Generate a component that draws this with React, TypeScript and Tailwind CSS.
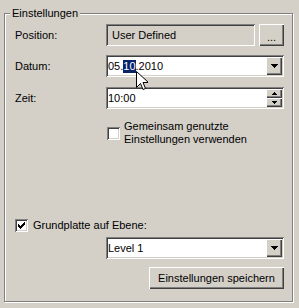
import React from "react";

const raised =
  "shadow-[inset_1px_1px_0_#fff,inset_-1px_-1px_0_#404040,inset_-2px_-2px_0_#808080]";
const sunken =
  "shadow-[inset_1px_1px_0_#808080,inset_-1px_-1px_0_#fff,inset_2px_2px_0_#404040,inset_-2px_-2px_0_#d4d0c8]";

function DownArrow() {
  return (
    <svg width="7" height="4" viewBox="0 0 7 4">
      <path d="M0 0H7L3.5 4Z" fill="#000" shapeRendering="crispEdges" />
    </svg>
  );
}

function SmallArrow({ up }: { up?: boolean }) {
  return (
    <svg width="5" height="3" viewBox="0 0 5 3">
      {up ? (
        <path d="M2 0h1v1h1v1h1v1H0V2h1V1h1z" fill="#000" />
      ) : (
        <path d="M0 0h5v1H4v1H3v1H2V2H1V1H0z" fill="#000" />
      )}
    </svg>
  );
}

function Check({ checked }: { checked?: boolean }) {
  return (
    <div className={`w-[13px] h-[13px] bg-white ${sunken} flex items-center justify-center shrink-0`}>
      {checked && (
        <svg width="7" height="7" viewBox="0 0 7 7">
          <path
            d="M6 0h1v3H6v1H5v1H4v1H3v1H2V6H1V5H0V2h1v1h1v1h1V3h1V2h1V1h1z"
            fill="#000"
          />
        </svg>
      )}
    </div>
  );
}

function Combo({ children }: { children: React.ReactNode }) {
  return (
    <div className={`flex-1 h-[22px] bg-white ${sunken} flex items-center pl-[2px] pr-[2px]`}>
      <div className="flex-1 flex items-center">{children}</div>
      <div className={`w-[16px] h-[18px] bg-[#d4d0c8] ${raised} flex items-center justify-center`}>
        <DownArrow />
      </div>
    </div>
  );
}

export default function App() {
  return (
    <div className="relative w-[299px] h-[308px] bg-[#d4d0c8] pt-[13px] pl-[4px] font-['Liberation_Sans',Arial,sans-serif] text-[11px] leading-[13px] text-black">
      <div className="relative w-[289px] h-[289px] border border-[#808080] shadow-[inset_1px_1px_0_#fff,1px_1px_0_#fff] pl-[10px] pr-[8px] pt-[10px] flex flex-col">
        <span className="absolute left-[5px] top-[-8px] bg-[#d4d0c8] px-[2px] leading-[14px]">
          Einstellungen
        </span>

        <div className="flex items-center h-[22px]">
          <span className="w-[91px]">Position:</span>
          <div className={`flex-1 h-[22px] bg-[#d4d0c8] ${sunken} flex items-center pl-[6px]`}>
            User Defined
          </div>
          <div className={`ml-[4px] w-[25px] h-[22px] ${raised} flex items-center justify-center`}>
            <span className="leading-[11px] pt-[4px]">...</span>
          </div>
        </div>

        <div className="flex items-center h-[22px] mt-[9px]">
          <span className="w-[91px]">Datum:</span>
          <Combo>
            <span>05.</span>
            <span className="bg-[#0a246a] text-white">10</span>
            <span>.2010</span>
          </Combo>
        </div>

        <div className="flex items-center h-[22px] mt-[10px]">
          <span className="w-[91px]">Zeit:</span>
          <div className={`flex-1 h-[22px] bg-white ${sunken} flex items-center pl-[2px] pr-[2px]`}>
            <span className="flex-1">10:00</span>
            <div className="flex flex-col w-[16px] h-[18px]">
              <div className={`h-[9px] bg-[#d4d0c8] ${raised} flex items-center justify-center`}>
                <SmallArrow up />
              </div>
              <div className={`h-[9px] bg-[#d4d0c8] ${raised} flex items-center justify-center`}>
                <SmallArrow />
              </div>
            </div>
          </div>
        </div>

        <div className="flex items-center mt-[11px] pl-[92px] gap-[4px]">
          <Check />
          <span>
            Gemeinsam genutzte
            <br />
            Einstellungen verwenden
          </span>
        </div>

        <div className="flex items-center mt-[73px] gap-[5px]">
          <Check checked />
          <span>Grundplatte auf Ebene:</span>
        </div>

        <div className="flex mt-[5px] pl-[91px]">
          <Combo>
            <span>Level 1</span>
          </Combo>
        </div>

        <div className="flex justify-end mt-[8px]">
          <div className={`w-[135px] h-[22px] ${raised} flex items-center justify-center`}>
            Einstellungen speichern
          </div>
        </div>
      </div>

      <svg
        className="absolute left-[136px] top-[71px]"
        width="12"
        height="20"
        viewBox="0 0 12 20"
      >
        <path
          d="M0.5 0.5V16.5L4.5 12.5L7 18.5L9.5 17.5L7 11.5H12.5Z"
          fill="#fff"
          stroke="#000"
          strokeWidth="1"
          strokeLinejoin="miter"
        />
      </svg>
    </div>
  );
}
